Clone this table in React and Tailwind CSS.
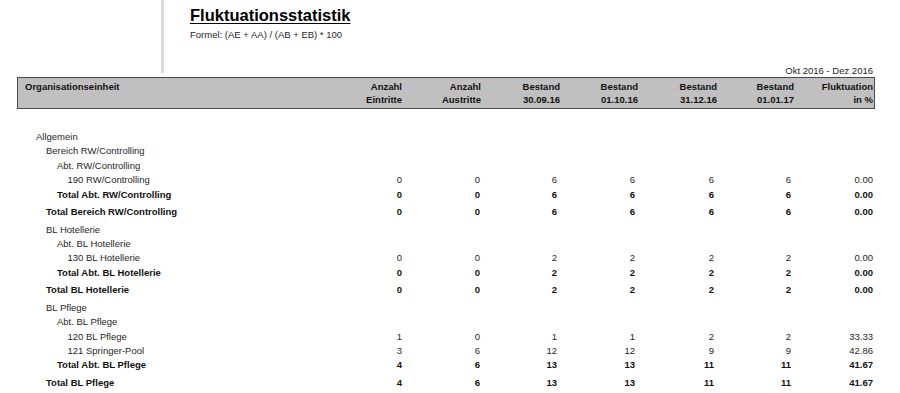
import React from 'react';

const font = { fontFamily: '"Liberation Sans", Arial, sans-serif' };

// right padding per numeric column for header / data cells
const colW = ['w-[72px]', 'w-[79px]', 'w-[79px]', 'w-[78px]', 'w-[79px]', 'w-[77px]', 'w-[79px]'];
const dataPad = ['pr-0', 'pr-[1px]', 'pr-[3px]', 'pr-[3px]', 'pr-[3px]', 'pr-[3px]', 'pr-0'];
const indent = ['pl-[18px]', 'pl-[28px]', 'pl-[39px]', 'pl-[49.5px]'];

const headers = [
  ['Anzahl', 'Eintritte'],
  ['Anzahl', 'Austritte'],
  ['Bestand', '30.09.16'],
  ['Bestand', '01.10.16'],
  ['Bestand', '31.12.16'],
  ['Bestand', '01.01.17'],
  ['Fluktuation', 'in %'],
];

const rows = [
  { label: 'Allgemein', level: 0 },
  { label: 'Bereich RW/Controlling', level: 1 },
  { label: 'Abt. RW/Controlling', level: 2 },
  { label: '190 RW/Controlling', level: 3, vals: [0, 0, 6, 6, 6, 6, '0.00'] },
  { label: 'Total Abt. RW/Controlling', level: 2, total: true, vals: [0, 0, 6, 6, 6, 6, '0.00'] },
  { label: 'Total Bereich RW/Controlling', level: 1, total: true, major: true, vals: [0, 0, 6, 6, 6, 6, '0.00'] },
  { label: 'BL Hotellerie', level: 1 },
  { label: 'Abt. BL Hotellerie', level: 2 },
  { label: '130 BL Hotellerie', level: 3, vals: [0, 0, 2, 2, 2, 2, '0.00'] },
  { label: 'Total Abt. BL Hotellerie', level: 2, total: true, vals: [0, 0, 2, 2, 2, 2, '0.00'] },
  { label: 'Total BL Hotellerie', level: 1, total: true, major: true, vals: [0, 0, 2, 2, 2, 2, '0.00'] },
  { label: 'BL Pflege', level: 1 },
  { label: 'Abt. BL Pflege', level: 2 },
  { label: '120 BL Pflege', level: 3, vals: [1, 0, 1, 1, 2, 2, '33.33'] },
  { label: '121 Springer-Pool', level: 3, vals: [3, 6, 12, 12, 9, 9, '42.86'] },
  { label: 'Total Abt. BL Pflege', level: 2, total: true, vals: [4, 6, 13, 13, 11, 11, '41.67'] },
  { label: 'Total BL Pflege', level: 1, total: true, major: true, vals: [4, 6, 13, 13, 11, 11, '41.67'] },
];

const Row = ({ row }) => (
  <div
    className={`flex h-[14.45px] items-center mx-[1px] pr-[1px] ${row.major ? 'my-[3px]' : ''} ${
      row.total ? 'font-bold text-[#111]' : 'text-[#262626]'
    }`}
  >
    <div className={`flex-1 whitespace-nowrap ${indent[row.level]}`}>{row.label}</div>
    {colW.map((w, i) => (
      <div key={i} className={`${w} ${dataPad[i]} text-right`}>
        {row.vals ? row.vals[i] : ''}
      </div>
    ))}
  </div>
);

export default function App() {
  return (
    <div className="w-[900px] h-[393px] bg-white overflow-hidden text-[9.5px]" style={font}>
      {/* Title block */}
      <div className="flex h-[76px]">
        <div className="w-[161px]" />
        <div className="w-[3px] h-[73px] bg-[#d9d9d9]" />
        <div className="flex-1 flex flex-col pl-[26px] pr-[27px]">
          <h1 className="pt-[7px] text-[16.5px] leading-none font-bold underline underline-offset-[2px] text-black">
            Fluktuationsstatistik
          </h1>
          <p className="mt-[5px] leading-[11px] text-[#262626]">Formel: (AE + AA) / (AB + EB) * 100</p>
          <p className="mt-auto leading-[11px] text-right text-[#262626]">Okt 2016 - Dez 2016</p>
        </div>
      </div>

      <div className="ml-[17px] w-[858px]">
        {/* Header */}
        <div className="mt-[1px] flex border border-[#4a4a4a] bg-[#c0c0c0] pt-[3px] pb-[2px] pr-[1px] font-bold text-[#111] leading-[12.5px]">
          <div className="flex-1 pl-[7px]">Organisationseinheit</div>
          {headers.map((h, i) => (
            <div key={i} className={`${colW[i]} text-right`}>
              <div>{h[0]}</div>
              <div>{h[1]}</div>
            </div>
          ))}
        </div>

        {/* Rows */}
        <div className="mt-[20.8px]">
          {rows.map((r, i) => (
            <Row key={i} row={r} />
          ))}
        </div>
      </div>
    </div>
  );
}
